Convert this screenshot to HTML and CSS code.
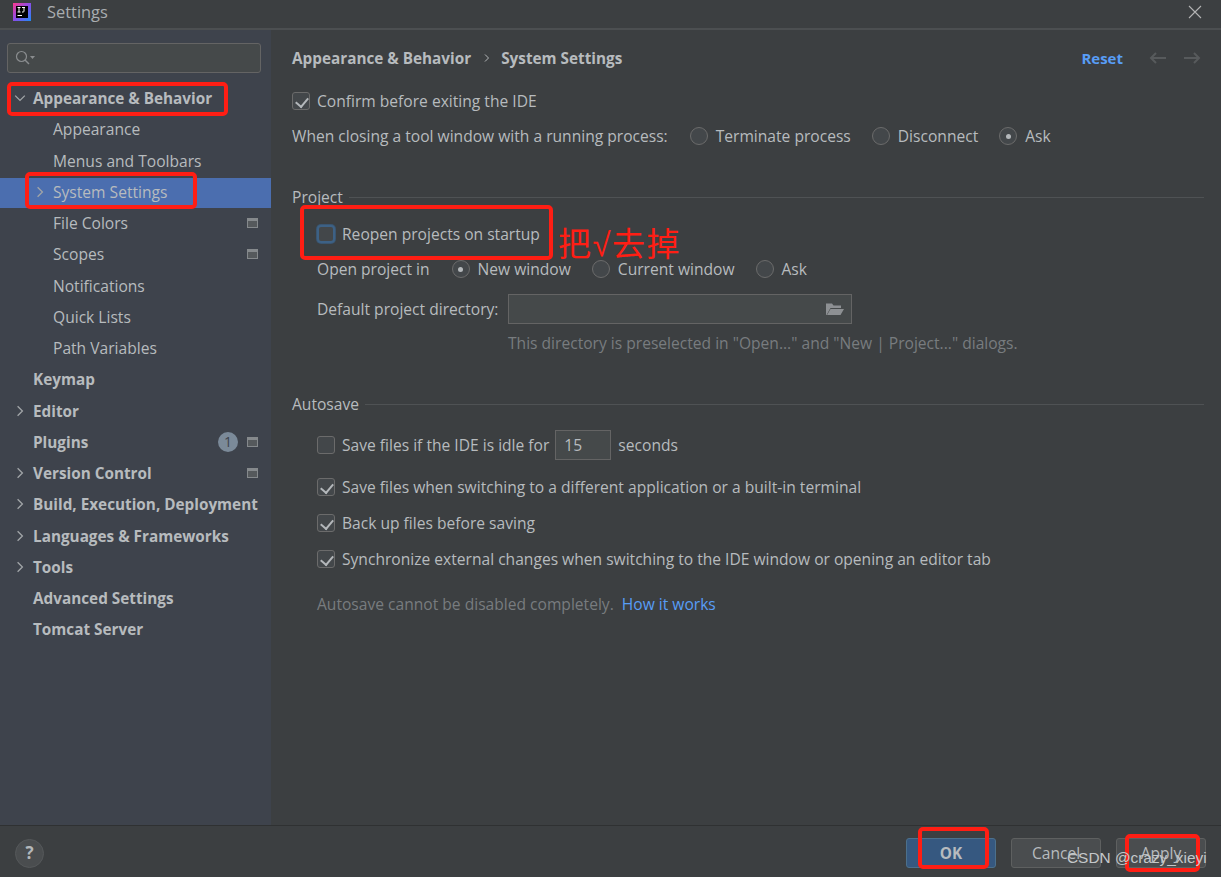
FILE: index.html
```html
<!DOCTYPE html>
<html lang="en">
<head>
<meta charset="utf-8">
<title>Settings</title>
<link rel="stylesheet" href="styles.css">
</head>
<body>
<div class="window">
  <header class="titlebar">
    <svg class="logo" width="18" height="18" viewBox="0 0 18 18"><defs><linearGradient id="lg" x1="0" y1="0" x2="1" y2="1"><stop offset="0" stop-color="#fc3a8d"/><stop offset=".5" stop-color="#8a4de8"/><stop offset="1" stop-color="#1f8bf5"/></linearGradient></defs><rect width="18" height="18" fill="url(#lg)"/><rect x="3" y="3" width="12" height="12" fill="#000"/><path d="M4.5 4.5h3M6 4.5v4.500M4.500 9h3M9 4.500h3M11 4.500v3.700q0 .8-.8.8H9" fill="none" stroke="#fff" stroke-width="1"/><rect x="4.500" y="12" width="4.500" height="1" fill="#fff"/></svg>
    <span class="title">Settings</span>
    <svg class="close" width="14" height="14" viewBox="0 0 14 14"><path d="M1 1l12 12M13 1L1 13" stroke="#b4b4b4" stroke-width="1.100"/></svg>
  </header>
  <div class="body">
    <aside class="sidebar">
      <div class="search">
        <svg width="20" height="16" viewBox="0 0 20 16"><circle cx="6.500" cy="6.500" r="5" fill="none" stroke="#8a8d8f" stroke-width="1.200"/><path d="M10 10l4 4" stroke="#8a8d8f" stroke-width="1.400"/><path d="M15 6h5l-2.500 3z" fill="#8a8d8f"/></svg>
      </div>
      <nav class="tree">
        <div class="row top"><svg class="chev" viewBox="0 0 10 10"><path d="M1 3l4 4 4-4"/></svg><span>Appearance &amp; Behavior</span></div>
        <div class="row sub"><span>Appearance</span></div>
        <div class="row sub"><span>Menus and Toolbars</span></div>
        <div class="row sub selected"><svg class="chev" viewBox="0 0 10 10"><path d="M3 1l4 4-4 4"/></svg><span>System Settings</span></div>
        <div class="row sub"><span>File Colors</span><i class="proj"></i></div>
        <div class="row sub"><span>Scopes</span><i class="proj"></i></div>
        <div class="row sub"><span>Notifications</span></div>
        <div class="row sub"><span>Quick Lists</span></div>
        <div class="row sub"><span>Path Variables</span></div>
        <div class="row top"><span>Keymap</span></div>
        <div class="row top"><svg class="chev" viewBox="0 0 10 10"><path d="M3 1l4 4-4 4"/></svg><span>Editor</span></div>
        <div class="row top"><span>Plugins</span><b class="badge">1</b><i class="proj"></i></div>
        <div class="row top"><svg class="chev" viewBox="0 0 10 10"><path d="M3 1l4 4-4 4"/></svg><span>Version Control</span><i class="proj"></i></div>
        <div class="row top"><svg class="chev" viewBox="0 0 10 10"><path d="M3 1l4 4-4 4"/></svg><span>Build, Execution, Deployment</span></div>
        <div class="row top"><svg class="chev" viewBox="0 0 10 10"><path d="M3 1l4 4-4 4"/></svg><span>Languages &amp; Frameworks</span></div>
        <div class="row top"><svg class="chev" viewBox="0 0 10 10"><path d="M3 1l4 4-4 4"/></svg><span>Tools</span></div>
        <div class="row top"><span>Advanced Settings</span></div>
        <div class="row top"><span>Tomcat Server</span></div>
      </nav>
    </aside>
    <main class="content">
      <div class="crumbs">
        <strong>Appearance &amp; Behavior</strong>
        <svg class="sep" width="6" height="8" viewBox="0 0 6 8"><path d="M1 0.500l3.500 3.500-3.500 3.500" fill="none" stroke="#b4b8ba"/></svg>
        <strong>System Settings</strong>
        <a class="reset">Reset</a>
        <svg class="arrow" width="18" height="14" viewBox="0 0 18 14"><path d="M17 7H2M7 2L2 7l5 5" fill="none" stroke="#575a5c" stroke-width="2"/></svg>
        <svg class="arrow" width="18" height="14" viewBox="0 0 18 14"><path d="M1 7h15M11 2l5 5-5 5" fill="none" stroke="#575a5c" stroke-width="2"/></svg>
      </div>

      <label class="line confirm"><i class="check on"></i>Confirm before exiting the IDE</label>
      <div class="line closing">
        <span class="closing-label">When closing a tool window with a running process:</span>
        <i class="radio"></i><span class="opt">Terminate process</span>
        <i class="radio"></i><span class="opt">Disconnect</span>
        <i class="radio sel"></i><span>Ask</span>
      </div>

      <div class="group project-head"><span>Project</span><hr></div>
      <div class="indent">
        <label class="line reopen"><i class="check focus"></i>Reopen projects on startup</label>
        <div class="line openin">
          <span class="openin-label">Open project in</span>
          <i class="radio sel"></i><span class="opt">New window</span>
          <i class="radio"></i><span class="opt">Current window</span>
          <i class="radio"></i><span>Ask</span>
        </div>
        <div class="line dir">
          <span class="dir-label">Default project directory:</span>
          <div class="field">
            <svg width="20" height="14" viewBox="0 0 20 14"><path d="M1 13V1.500h6l1.500 2H16V6H5.500L1.500 13zM5.500 7H19l-3.500 6H2z" fill="#8d9093"/></svg>
          </div>
        </div>
        <p class="hint dirhint">This directory is preselected in "Open..." and "New | Project..." dialogs.</p>
      </div>

      <div class="group autosave-head"><span>Autosave</span><hr></div>
      <div class="indent">
        <div class="line idle"><i class="check"></i><span>Save files if the IDE is idle for</span><span class="num">15</span><span>seconds</span></div>
        <label class="line opt-row first"><i class="check on"></i>Save files when switching to a different application or a built-in terminal</label>
        <label class="line opt-row"><i class="check on"></i>Back up files before saving</label>
        <label class="line opt-row"><i class="check on"></i>Synchronize external changes when switching to the IDE window or opening an editor tab</label>
        <p class="hint autohint">Autosave cannot be disabled completely. <a>How it works</a></p>
      </div>
    </main>
  </div>
  <footer class="footer">
    <span class="help">?</span>
    <div class="buttons">
      <button class="btn primary">OK</button>
      <button class="btn">Cancel</button>
      <button class="btn">Apply</button>
    </div>
  </footer>

  <div class="mark m1"></div>
  <div class="mark m2"></div>
  <div class="mark m3"></div>
  <div class="mark m4"></div>
  <div class="mark m5"></div>
  <div class="note">把√去掉</div>
  <div class="watermark">CSDN @crazy_xieyi</div>
</div>
</body>
</html>
```
FILE: styles.css
```css
* { box-sizing: border-box; }
html, body { margin: 0; height: 100%; }
body { background: #3c3f41; color: #b7bbbe; font: 15.6px/20px "Open Sans", "Noto Sans", "Noto Sans CJK SC", sans-serif; overflow: hidden; }
.window { position: relative; width: 1221px; height: 877px; display: flex; flex-direction: column; overflow: hidden; }

.titlebar { height: 30px; flex: none; display: flex; align-items: center; padding: 0 19px 5px 13px; border-bottom: 2px solid #4c4f51; background: #3c3f41; }
.logo { flex: none; }
.title { margin-left: 16px; color: #a9adb0; font-size: 16.4px; }
.close { margin-left: auto; }

.body { flex: 1; display: flex; min-height: 0; }
.sidebar { width: 271px; flex: none; background: #3e434c; padding-top: 13px; }
.search { margin: 0 10px 0 7px; height: 30px; background: #45494a; border: 1px solid #646464; border-radius: 3px; display: flex; align-items: center; padding-left: 7px; }
.tree { margin-top: 9.600px; }
.row { height: 31.260px; display: flex; align-items: center; position: relative; padding-left: 33px; padding-right: 13px; color: #b7bbbe; }
.row.top { font-weight: 700; font-size: 15.300px; }
.row.sub { padding-left: 53px; }
.row.selected { background: linear-gradient(#4b6eaf, #4b6eaf) 0 1.600px / 100% 31px no-repeat; }
.chev { position: absolute; width: 12px; height: 12px; left: 14px; top: 9.600px; fill: none; stroke: #a0a4a7; stroke-width: 1.100; }
.sub .chev { left: 34px; }
.proj { margin-left: auto; width: 11px; height: 10px; border: 1px solid #85898c; border-top-width: 3px; background: #55595c; display: block; }
.badge { margin-left: auto; margin-right: 9px; width: 20px; height: 20px; border-radius: 50%; background: #7b8a99; color: #3e434c; font-weight: 400; text-align: center; font-size: 14px; line-height: 20px; }
.badge + .proj { margin-left: 0; }

.content { flex: 1; padding: 0 17px 0 21px; min-width: 0; }
.crumbs { display: flex; align-items: center; height: 20px; margin-top: 18px; font-size: 15.300px; }
.crumbs strong { font-weight: 700; }
.sep { margin: 0 11px 0 13px; }
.reset { margin-left: auto; color: #589df6; font-weight: 700; font-size: 15px; margin-right: 26px; }
.arrow { margin-right: 16px; }
.arrow:last-child { margin-right: 3px; }

.line { display: flex; align-items: center; height: 20px; }
.check { flex: none; width: 18px; height: 18px; margin-right: 7px; border: 1px solid #6b6b6b; border-radius: 3px; background: #43474a; position: relative; display: block; }
.check.on::after { content: ""; position: absolute; left: 5px; top: 1.500px; width: 6px; height: 10px; border: solid #b4b8bb; border-width: 0 2px 2px 0; transform: rotate(40deg); }
.check.focus { border: 2px solid #3d6185; box-shadow: 0 0 0 1px #3a5570; border-radius: 4px; }
.radio { flex: none; width: 18px; height: 18px; border: 1px solid #6b6b6b; border-radius: 50%; background: #43474a; margin-right: 8px; display: block; position: relative; }
.radio.sel::after { content: ""; position: absolute; left: 5.500px; top: 5.500px; width: 5px; height: 5px; border-radius: 50%; background: #b4b8bb; }
.opt { margin-right: 21px; }

.confirm { margin-top: 23px; }
.closing { margin-top: 15px; }
.closing-label { margin-right: 22px; }

.group { display: flex; align-items: center; gap: 6px; }
.group hr { flex: 1; height: 1px; border: 0; background: #4f5254; margin: 0; }
.project-head { margin-top: 41px; }
.indent { padding-left: 25px; }
.reopen { margin-top: 17px; }
.openin { margin-top: 15px; }
.openin-label { margin-right: 22px; }
.dir { margin-top: 15px; height: 30px; }
.dir-label { margin-right: 10px; }
.field { width: 344px; height: 30px; background: #45494a; border: 1px solid #646464; display: flex; align-items: center; justify-content: flex-end; padding-right: 6px; }
.hint { margin: 0; color: #787c7f; }
.dirhint { margin: 9px 0 0 191px; }

.autosave-head { margin-top: 41px; }
.idle { margin-top: 16px; height: 30px; }
.num { width: 56px; height: 30px; margin: 0 7px 0 6px; padding: 4px 0 0 8px; background: #45494a; border: 1px solid #646464; }
.opt-row { margin-top: 16px; }
.opt-row.first { margin-top: 17px; }
.autohint { margin-top: 25px; }
.autohint a { color: #589df6; margin-left: 4px; }

.footer { height: 52px; flex: none; border-top: 1px solid #2f3132; display: flex; align-items: center; justify-content: space-between; padding: 3px 15px 0 15px; }
.help { width: 29px; height: 29px; border-radius: 50%; background: #4a4d4f; border: 1px solid #55585a; display: flex; align-items: center; justify-content: center; font-weight: 700; color: #b4b8bb; font-size: 17px; }
.buttons { display: flex; gap: 15px; }
.btn { width: 90px; height: 30px; border-radius: 3px; background: #4a4d4f; border: 1px solid #5e6060; color: #b7bbbe; font: inherit; padding: 0; }
.primary { background: #365880; border-color: #4c708c; font-weight: 700; font-size: 15.300px; }

.mark { position: absolute; border: 4px solid #ff1e14; border-radius: 5px; }
.m1 { left: 7px; top: 82px; width: 221px; height: 34px; }
.m2 { left: 25px; top: 172px; width: 172px; height: 37px; }
.m3 { left: 300px; top: 205px; width: 253px; height: 55px; }
.m4 { left: 918px; top: 827px; width: 71px; height: 42px; }
.m5 { left: 1125px; top: 834px; width: 75px; height: 38px; }
.note { position: absolute; left: 558px; top: 225px; color: #ff1e14; font: 33px/40px "Liberation Sans", "Noto Sans CJK SC", sans-serif; letter-spacing: 1.500px; }
.watermark { position: absolute; left: 1067px; top: 848px; color: #c4c7c9; font: 15.400px/20px "Liberation Sans", sans-serif; }
```
